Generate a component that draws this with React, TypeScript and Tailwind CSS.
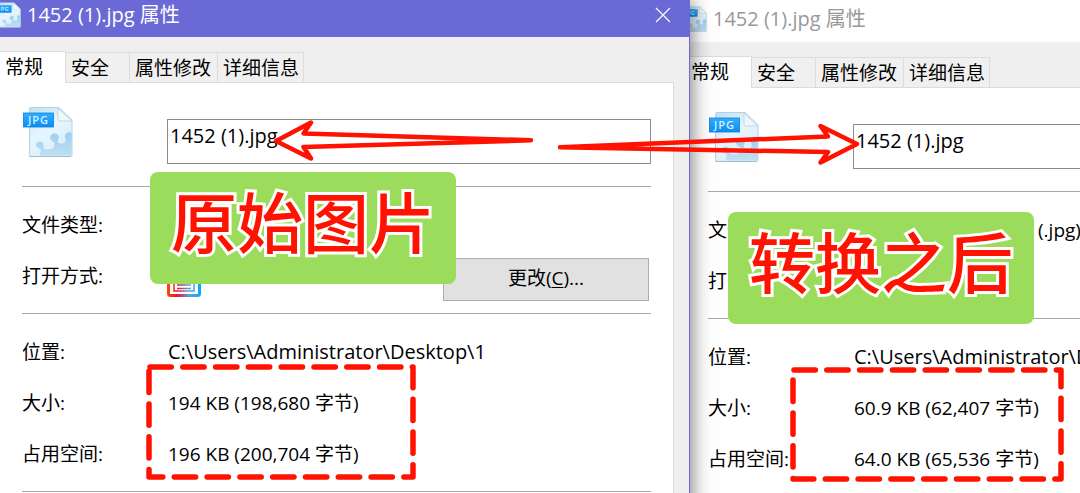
import clsx from "clsx";

interface FileInfo {
  name: string;
  location: string;
  size: string;
  sizeOnDisk: string;
}

const original: FileInfo = {
  name: "1452 (1).jpg",
  location: "C:\\Users\\Administrator\\Desktop\\1",
  size: "194 KB (198,680 字节)",
  sizeOnDisk: "196 KB (200,704 字节)",
};

const converted: FileInfo = {
  name: "1452 (1).jpg",
  location: "C:\\Users\\Administrator\\Desktop\\1",
  size: "60.9 KB (62,407 字节)",
  sizeOnDisk: "64.0 KB (65,536 字节)",
};

const tabs = [
  { label: "安全", width: "w-16" },
  { label: "属性修改", width: "w-[88px]" },
  { label: "详细信息", width: "w-[86px]" },
];

function JpgIcon({ id, className }: { id: string; className?: string }) {
  return (
    <svg viewBox="0 0 50 52" className={className} aria-hidden="true">
      <defs>
        <linearGradient id={`${id}-page`} x1="0" y1="0" x2="0.6" y2="1">
          <stop offset="0" stopColor="#bfe0f2" />
          <stop offset="0.5" stopColor="#e6f5fd" />
          <stop offset="1" stopColor="#d8effb" />
        </linearGradient>
        <linearGradient id={`${id}-piece`} x1="0" y1="0" x2="0" y2="1">
          <stop offset="0" stopColor="#9dcfed" />
          <stop offset="1" stopColor="#bfdff3" />
        </linearGradient>
        <linearGradient id={`${id}-tag`} x1="0" y1="0" x2="0" y2="1">
          <stop offset="0" stopColor="#2fb0fb" />
          <stop offset="1" stopColor="#0a8df5" />
        </linearGradient>
      </defs>
      <path d="M8 1.5H36L49 14V48.5Q49 50.5 47 50.5H8Q6.5 50.5 6.5 48.5V3Q6.5 1.5 8 1.5Z" fill={`url(#${id}-page)`} stroke="#b3d2e5" />
      {/* Jigsaw edge: three knobs rising to the right */}
      <path
        d="M17 49.500C16.500 46 18.500 44.500 17.500 43C15.500 42 13 41.500 13 38.500C13.500 34.500 19.500 34.500 20.500 38C21 40.500 19.500 42 22 43C25 43.500 30 43.500 31 41C31.500 38 32 36.500 30 35.500C26.500 34.500 26 29.500 30 27.800C34 26.800 37 30 35.500 33C34 36 35 37.500 38 37.500C42 37.500 43 35.500 42.500 33C41 30 42.500 26.500 46 26.300C47.500 26.300 48 26.800 48.500 27.200V49.500Z"
        fill={`url(#${id}-piece)`}
      />
      <path d="M6.500 50.500H48" stroke="#9cbdd3" />
      <path d="M35 2L48.500 15H37Q35 15 35 13Z" fill="#f4f7fa" stroke="#b9cfdd" strokeWidth="0.8" />
      <rect x="0.500" y="7" width="30" height="14" fill={`url(#${id}-tag)`} stroke="#0c7fd8" strokeWidth="0.800" />
      <text x="15.500" y="18" textAnchor="middle" fontFamily="Open Sans" fontSize="11" fontWeight="600" letterSpacing="1" fill="#d8efff">
        JPG
      </text>
    </svg>
  );
}

function ViewerIcon() {
  return (
    <svg viewBox="0 0 34 34" className="size-[34px]" aria-hidden="true">
      <defs>
        <linearGradient id="viewer" gradientUnits="userSpaceOnUse" x1="0" y1="0" x2="34" y2="0">
          <stop offset="0" stopColor="#ff4a00" />
          <stop offset="0.3" stopColor="#f01030" />
          <stop offset="0.65" stopColor="#5aa0e0" />
          <stop offset="1" stopColor="#00aaff" />
        </linearGradient>
      </defs>
      <rect x="1.500" y="1.500" width="31" height="30" rx="2" fill="none" stroke="url(#viewer)" strokeWidth="3" />
      <path d="M7 7V27H27V7M10 24.500H24M10 21H24" fill="none" stroke="url(#viewer)" strokeWidth="1.500" />
    </svg>
  );
}

function Row({ label, children }: { label: string; children: React.ReactNode }) {
  return (
    <div className="flex h-[51px] items-center">
      <dt className="w-[146px] shrink-0">{label}</dt>
      <dd className="flex h-full flex-1 items-center">{children}</dd>
    </div>
  );
}

interface PropertiesWindowProps {
  id: string;
  file: FileInfo;
  active?: boolean;
}

function PropertiesWindow({ id, file, active }: PropertiesWindowProps) {
  return (
    <section
      className={clsx(
        "min-h-screen bg-[#efefef]",
        active && "border-r border-[#6b69d6] shadow-[0_0_20px_rgba(0,0,0,0.6)]"
      )}
    >
      {/* Title bar */}
      <header
        className={clsx(
          "flex items-center justify-between",
          active ? "h-[37px] bg-[#6b69d6] pb-2 text-white" : "h-[42px] bg-white pb-1 text-[#999999]"
        )}
      >
        <h2 className="flex items-center gap-1.5 text-xl font-normal">
          <JpgIcon id={`${id}-small`} className="-ml-1 h-[26px] w-[25px]" />
          {file.name} 属性
        </h2>
        <button type="button" aria-label="关闭" className="mr-4 p-0.5">
          <svg viewBox="0 0 16 16" className="size-4" fill="none" stroke="currentColor" strokeWidth="1.200">
            <path d="M1 1L15 15M15 1L1 15" />
          </svg>
        </button>
      </header>

      {/* Tabs */}
      <div role="tablist" className="flex h-[45px] items-end pt-3.5">
        <button type="button" role="tab" aria-selected="true" className="relative z-10 -mb-px h-8 w-[66px] border-t border-r border-[#dcdcdc] bg-white pb-0.5 pl-[5px] text-left">
          常规
        </button>
        {tabs.map((tab) => (
          <button
            key={tab.label}
            type="button"
            role="tab"
            aria-selected="false"
            className={clsx("h-[30px] border-t border-r border-[#dcdcdc] bg-[#f0f0f0] pl-[5px] text-left", tab.width)}
          >
            {tab.label}
          </button>
        ))}
      </div>

      {/* General page */}
      <div className="mr-[15px] min-h-screen border-t border-r border-[#dcdcdc] bg-white px-[22px]">
        <div className="flex h-[103px] items-start pt-[23px]">
          <JpgIcon id={`${id}-large`} className="ml-px h-[52px] w-[50px]" />
          <input
            aria-label="文件名"
            defaultValue={file.name}
            className="mt-[13px] ml-[94px] h-[45px] min-w-0 flex-1 border border-[#8c8c8c] bg-white pb-3 pl-0.5 text-xl"
          />
        </div>
        <dl className="border-t border-[#a8a8a8] py-3">
          <Row label="文件类型:">
            <span className="pl-[184px]">(.jpg)</span>
          </Row>
          <Row label="打开方式:">
            <span className="-ml-px pt-2.5">
              <ViewerIcon />
            </span>
            <button type="button" className="mr-0.5 ml-auto h-[43px] w-[206px] self-end border border-[#adadad] bg-[#e1e1e1] pb-1">
              更改(<u className="underline-offset-2">C</u>)...
            </button>
          </Row>
        </dl>
        <dl className="border-y border-[#a8a8a8] py-3">
          <Row label="位置:">
            <span className="text-xl">{file.location}</span>
          </Row>
          <Row label="大小:">{file.size}</Row>
          <Row label="占用空间:">{file.sizeOnDisk}</Row>
        </dl>
      </div>
    </section>
  );
}

function Tag({ text, className }: { text: string; className: string }) {
  return (
    <div
      className={clsx(
        "absolute z-20 flex h-28 w-[306px] items-center justify-center rounded-lg bg-[#9bdc5c] pb-3 text-[66px] leading-none font-medium text-[#ff1200] [-webkit-text-stroke:6px_white] [paint-order:stroke_fill]",
        className
      )}
    >
      {text}
    </div>
  );
}

function DashedBox({ width, height, className }: { width: number; height: number; className: string }) {
  return (
    <svg width={width + 6} height={height + 6} className={clsx("absolute z-20", className)} aria-hidden="true">
      <path
        d={`M4 3H${width + 3}V${height + 3}H3V3`}
        fill="none"
        stroke="#ff1200"
        strokeWidth="5.500"
        strokeLinecap="round"
        strokeLinejoin="round"
        strokeDasharray="21.3 11.5"
      />
    </svg>
  );
}

function Arrows() {
  return (
    <svg
      viewBox="270 115 592 54"
      className="absolute top-[115px] left-[270px] z-20 h-[54px] w-[592px]"
      fill="none"
      stroke="#ff1200"
      strokeWidth="4.500"
      strokeLinecap="round"
      strokeLinejoin="round"
      aria-hidden="true"
    >
      <path d="M531 140.300L303.500 133.500L311 122.500L276 141L311 158.500L303.500 147L531 140.300Z" />
      <path d="M560 147.300L828 136.500L820.500 126L857 144L820.500 162.500L828 152L560 147.300Z" />
    </svg>
  );
}

export default function App() {
  return (
    <main className="relative flex h-screen overflow-hidden bg-white font-['Open_Sans','Noto_Sans_CJK_SC',sans-serif] text-[19px] leading-7 whitespace-nowrap text-black">
      <div className="relative z-10 min-w-0 flex-[69]">
        <PropertiesWindow id="original" file={original} active />
      </div>
      <div className="isolate min-w-0 flex-[39]">
        <div className="-ml-1 w-[177%]">
          <PropertiesWindow id="converted" file={converted} />
        </div>
      </div>

      {/* Annotations */}
      <Tag text="原始图片" className="top-[172px] left-[150px]" />
      <Tag text="转换之后" className="top-[212px] left-[728px]" />
      <DashedBox width={264} height={110} className="top-[364px] left-[146px]" />
      <DashedBox width={268} height={109} className="top-[367px] left-[790px]" />
      <Arrows />
    </main>
  );
}
